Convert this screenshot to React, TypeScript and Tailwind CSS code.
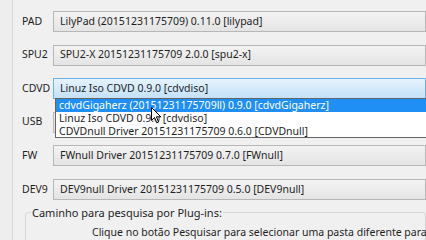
import { FC } from "react";

const rows = [
  { label: "PAD", value: "LilyPad (20151231175709) 0.11.0 [lilypad]" },
  { label: "SPU2", value: "SPU2-X 20151231175709 2.0.0 [spu2-x]" },
  { label: "CDVD", value: "Linuz Iso CDVD  0.9.0 [cdvdiso]", focused: true },
  { label: "USB", value: "USBnull Driver 20151231175709 0.7.0 [USBnull]" },
  { label: "FW", value: "FWnull Driver 20151231175709 0.7.0 [FWnull]" },
  { label: "DEV9", value: "DEV9null Driver 20151231175709 0.5.0 [DEV9null]" },
];

const App: FC = () => {
  return (
    <div
      className="relative w-[426px] h-[240px] overflow-hidden bg-[#f0f0f0] text-[10.5px] text-[#1e1e1e] flex"
      style={{ fontFamily: '"Noto Sans", "Open Sans", sans-serif' }}
    >
      <div className="w-[13px] shrink-0 h-full border-r border-[#d9d9d9] bg-[#eeeeee]" />
      <div className="flex-1 min-w-0 flex flex-col pl-[9px] pt-[11px]">
        <div className="flex flex-col gap-[12.6px]">
          {rows.map((r) => (
            <div key={r.label} className="flex items-center h-[21px]">
              <div className="w-[31px] shrink-0">{r.label}</div>
              <div
                className={
                  r.focused
                    ? "flex-1 min-w-0 h-full flex items-center pl-[6px] whitespace-nowrap border border-[#6cb0e8] bg-gradient-to-b from-[#e6f3fd] to-[#c3e1f8]"
                    : "flex-1 min-w-0 h-full flex items-center pl-[6px] whitespace-nowrap border border-[#b7b7b7] bg-gradient-to-b from-[#f3f3f3] to-[#e4e4e4]"
                }
              >
                {r.value}
              </div>
            </div>
          ))}
        </div>

        <fieldset className="mt-[6px] ml-[3px] border border-[#d5d5d5] rounded-[3px] pl-[5px] h-[60px] min-w-0">
          <legend className="px-[1px] leading-[14px] text-[11px]">Caminho para pesquisa por Plug-ins:</legend>
          <div className="pl-[61px] pt-[5px] whitespace-nowrap">
            Clique no botão Pesquisar para selecionar uma pasta diferente para plug-ins de
          </div>
        </fieldset>
      </div>

      {/* open dropdown list */}
      <div className="absolute left-[55px] top-[98px] w-[400px] h-[40px] bg-white border border-[#646464] flex flex-col leading-[13px]">
        <div className="h-[13px] bg-[#1f8ff5] text-white pl-[3px] whitespace-nowrap">
          cdvdGigaherz (20151231175709ll) 0.9.0 [cdvdGigaherz]
        </div>
        <div className="h-[13px] pl-[3px] whitespace-nowrap">Linuz Iso CDVD  0.9.0 [cdvdiso]</div>
        <div className="h-[13px] pl-[3px] whitespace-nowrap">CDVDnull Driver 20151231175709 0.6.0 [CDVDnull]</div>
      </div>

      {/* mouse cursor */}
      <svg className="absolute left-[151px] top-[107px]" width="11" height="17" viewBox="0 0 11 17">
        <path d="M0.5 0.5 L0.5 13.5 L3.5 10.5 L5.8 15.8 L7.6 15 L5.4 9.8 L9.8 9.8 Z" fill="white" stroke="black" strokeWidth="1" />
      </svg>
    </div>
  );
};

export default App;
